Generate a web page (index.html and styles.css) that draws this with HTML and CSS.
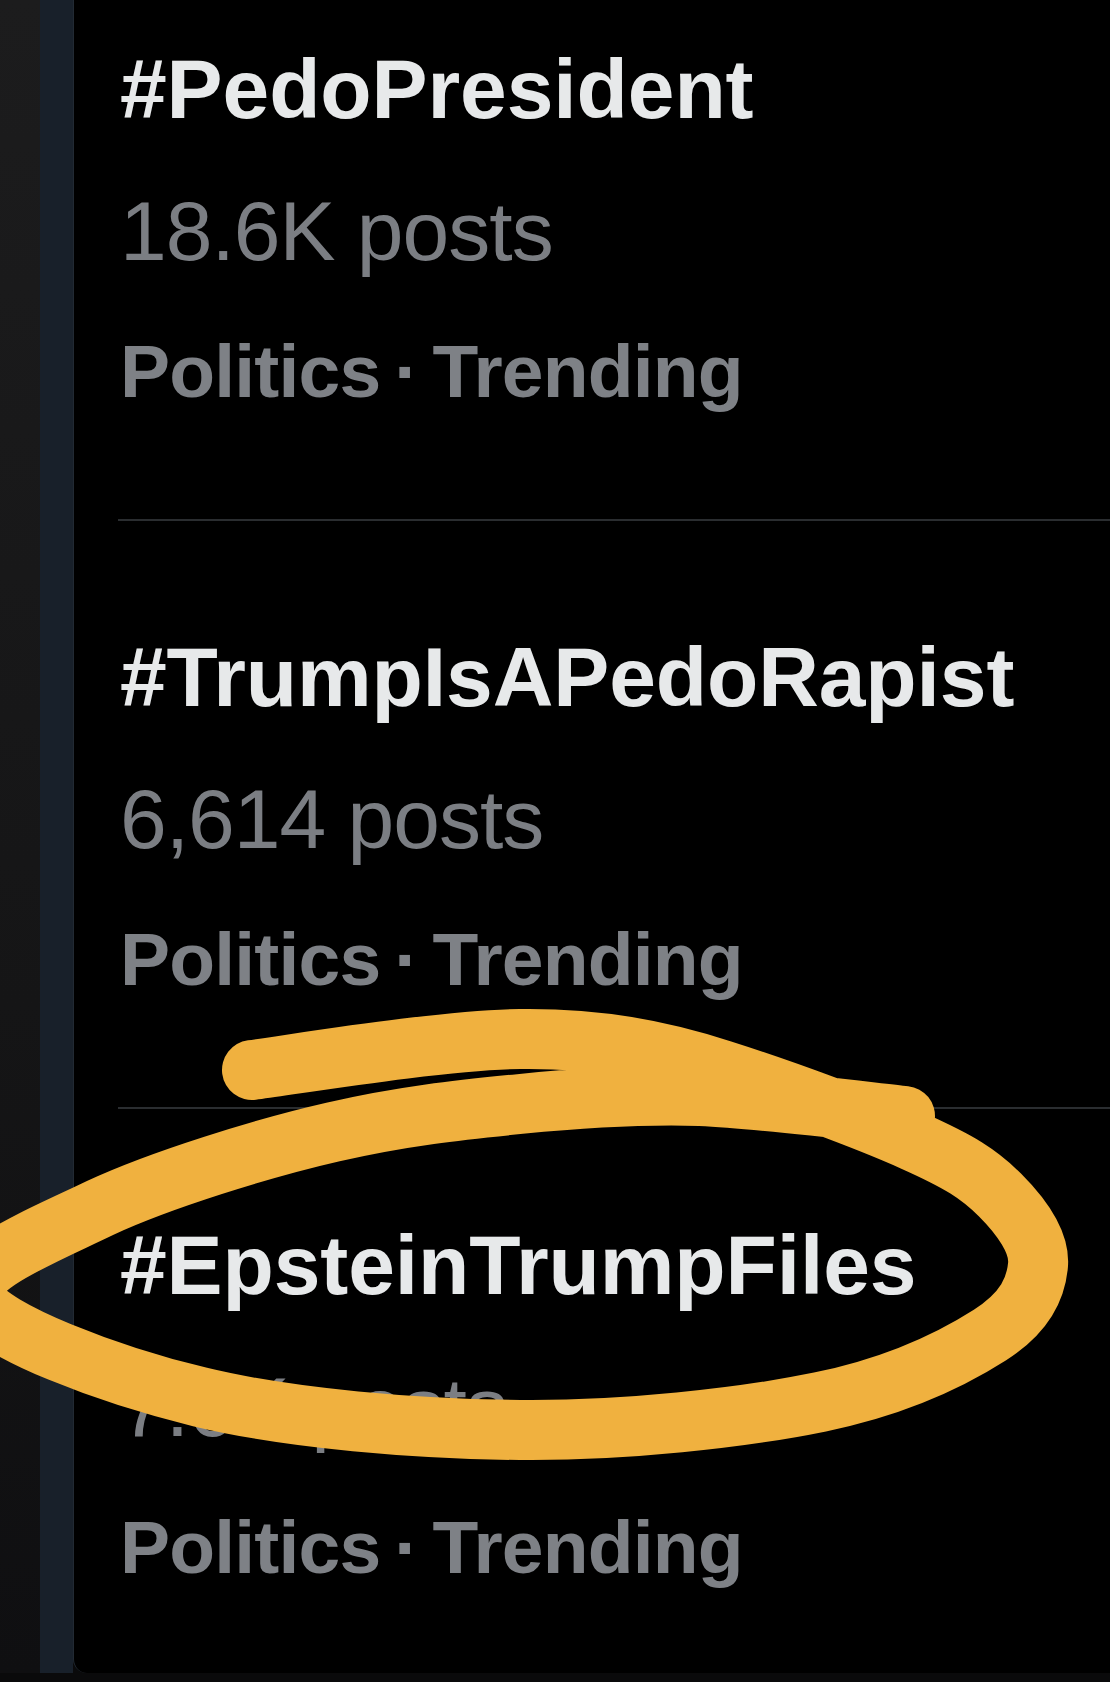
FILE: index.html
```html
<!DOCTYPE html>
<html lang="en">
<head>
<meta charset="utf-8">
<title>Trending</title>
<link rel="stylesheet" href="styles.css">
</head>
<body>
<div class="page">
  <div class="rail-outer"></div>
  <div class="rail-nav"></div>
  <main class="main">
    <section class="trend first">
      <div class="tag">#PedoPresident</div>
      <div class="count">18.6K posts</div>
      <div class="meta">Politics<span class="dot">·</span>Trending</div>
    </section>
    <section class="trend">
      <div class="tag">#TrumpIsAPedoRapist</div>
      <div class="count">6,614 posts</div>
      <div class="meta">Politics<span class="dot">·</span>Trending</div>
    </section>
    <section class="trend last">
      <div class="tag">#EpsteinTrumpFiles</div>
      <div class="count">7.6K posts</div>
      <div class="meta">Politics<span class="dot">·</span>Trending</div>
    </section>
  </main>
  <svg class="scribble" viewBox="0 0 1110 1682" width="1110" height="1682" aria-hidden="true">
    <path d="M252 1070 C297 1064 442 1040 520 1039 C598 1038 660 1050 722 1070 C785 1090 866 1120 913 1141 C960 1162 979 1174 1000 1195 C1021 1216 1040 1242 1038 1265 C1036 1288 1026 1312 990 1335 C954 1358 898 1386 820 1402 C742 1418 623 1431 520 1430 C417 1429 291 1419 200 1397 C109 1375 -8 1331 -25 1300 C-42 1269 40 1237 100 1208 C160 1180 263 1148 333 1132 C403 1116 459 1110 520 1104 C581 1098 637 1094 700 1096 C763 1099 867 1112 905 1116"/>
  </svg>
</div>
</body>
</html>
```
FILE: styles.css
```css
html, body {
  margin: 0;
  padding: 0;
  background: #0a0a0b;
}

.page {
  position: relative;
  width: 1110px;
  height: 1682px;
  display: flex;
  align-items: flex-start;
  overflow: hidden;
  font-family: "Liberation Sans", Arial, sans-serif;
}

.rail-outer {
  width: 40px;
  height: 1673px;
  background: linear-gradient(to bottom, #1c1c1d 0%, #151516 60%, #0f0f11 100%);
  flex: none;
}

.rail-nav {
  width: 33px;
  height: 1673px;
  background: #18202a;
  flex: none;
}

.main {
  flex: 1;
  height: 1673px;
  background: #000;
  border-left: 1px solid #222a33;
  border-bottom-left-radius: 14px;
  box-sizing: border-box;
}

.trend {
  margin-left: 44px;
  padding: 106px 0 98px 2px;
  border-bottom: 2px solid #2a2d30;
}

.trend.first {
  padding-top: 39px;
}

.trend.last {
  border-bottom: none;
}

.tag {
  font-size: 84px;
  line-height: 100px;
  font-weight: 700;
  color: #e7e9ea;
  letter-spacing: -0.1px;
  white-space: nowrap;
}

.count {
  margin-top: 42px;
  font-size: 84px;
  line-height: 100px;
  font-weight: 400;
  color: #7b7e83;
  letter-spacing: -1px;
  white-space: nowrap;
}

.meta {
  margin-top: 40px;
  font-size: 75px;
  line-height: 100px;
  font-weight: 700;
  color: #7e8186;
  letter-spacing: -0.8px;
  white-space: nowrap;
}

.dot {
  margin: 0 14px;
}

.scribble {
  position: absolute;
  left: 0;
  top: 0;
  pointer-events: none;
}

.scribble path {
  fill: none;
  stroke: #f0b13f;
  stroke-width: 60;
  stroke-linecap: round;
  stroke-linejoin: round;
}
```
